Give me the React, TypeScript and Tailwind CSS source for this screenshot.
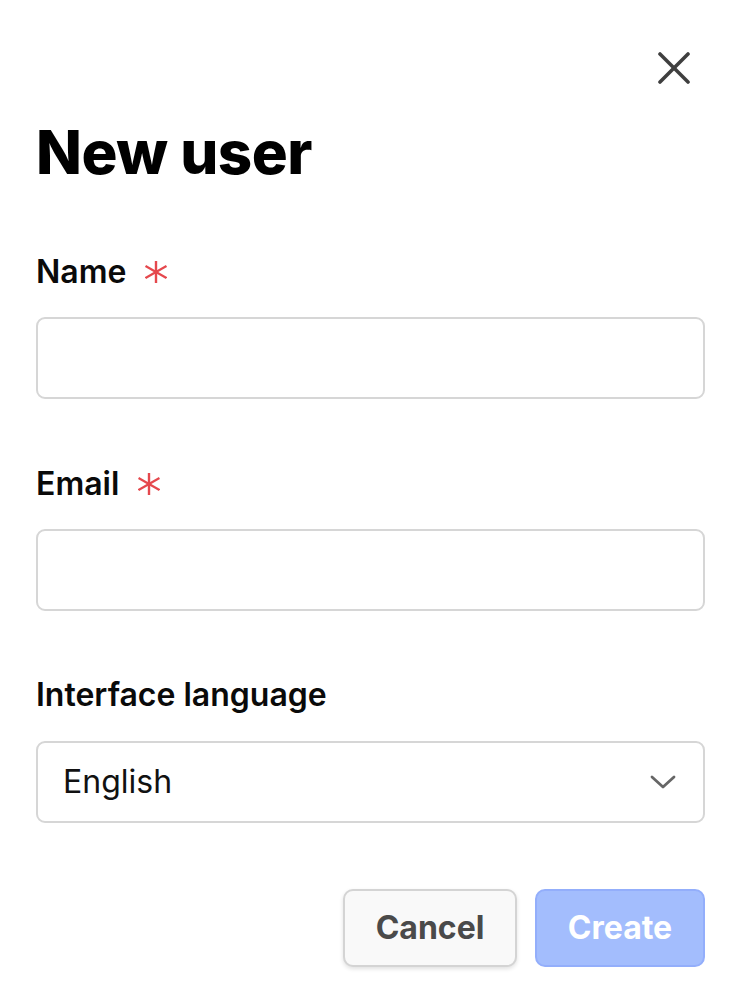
import React, { useState } from 'react';

const font = { fontFamily: 'Inter, "Noto Sans", sans-serif' };

const Asterisk = () => (
  <svg width="22" height="22" viewBox="0 0 22 22" className="ml-[19px]" aria-hidden>
    <g stroke="#e5484d" strokeWidth="2.4" strokeLinecap="butt">
      <line x1="11" y1="0" x2="11" y2="22" />
      <line x1="0.5" y1="5" x2="21.5" y2="17" />
      <line x1="0.5" y1="17" x2="21.5" y2="5" />
    </g>
  </svg>
);

const Label: React.FC<{ text: string; required?: boolean; className?: string }> = ({ text, required, className }) => (
  <div className={`flex items-center h-[40px] text-[32px] leading-[40px] font-semibold text-[#0a0a0a] ${className ?? ''}`}>
    <span>{text}</span>
    {required && <Asterisk />}
  </div>
);

export default function App() {
  const [name, setName] = useState('');
  const [email, setEmail] = useState('');

  return (
    <div className="min-h-screen bg-white" style={font}>
      <div className="w-[669px] ml-[36px] pt-[52px]">
        {/* close */}
        <div className="flex justify-end pr-[15px] h-[32px]">
          <button className="w-[32px] h-[32px]" aria-label="Close">
            <svg width="32" height="32" viewBox="0 0 32 32">
              <g stroke="#3f3f3f" strokeWidth="3.6" strokeLinecap="round">
                <line x1="2" y1="2" x2="30" y2="30" />
                <line x1="30" y1="2" x2="2" y2="30" />
              </g>
            </svg>
          </button>
        </div>

        <h1 className="mt-[38px] h-[60px] text-[60px] leading-none font-extrabold text-black tracking-[-0.5px]">
          New user
        </h1>

        <Label text="Name" required className="mt-[70px]" />
        <input
          value={name}
          onChange={(e) => setName(e.target.value)}
          className="mt-[25px] block w-full h-[82px] rounded-[9px] border-2 border-[#d6d6d6] px-[24px] text-[32px] outline-none"
        />

        <Label text="Email" required className="mt-[65px]" />
        <input
          value={email}
          onChange={(e) => setEmail(e.target.value)}
          className="mt-[25px] block w-full h-[82px] rounded-[9px] border-2 border-[#d6d6d6] px-[24px] text-[32px] outline-none"
        />

        <Label text="Interface language" className="mt-[64px]" />
        <div className="mt-[26px] h-[82px] w-full rounded-[9px] border-2 border-[#d6d6d6] flex items-center justify-between pl-[25px] pr-[27px]">
          <span className="text-[32px] text-[#111]">English</span>
          <svg width="26" height="16" viewBox="0 0 26 16">
            <polyline points="2,3 13,13 24,3" fill="none" stroke="#666" strokeWidth="2.8" strokeLinecap="round" strokeLinejoin="round" />
          </svg>
        </div>

        <div className="mt-[66px] flex justify-end gap-[18px]">
          <button className="w-[174px] h-[78px] rounded-[10px] border-2 border-[#d4d4d4] bg-[#f9f9f9] shadow-[0_2px_4px_rgba(0,0,0,0.12)] text-[32px] font-bold text-[#4a4a4a]">
            Cancel
          </button>
          <button className="w-[170px] h-[78px] rounded-[10px] border-2 border-[#93aefb] bg-[#a3bdfd] text-[32px] font-bold text-white">
            Create
          </button>
        </div>
      </div>
    </div>
  );
}
